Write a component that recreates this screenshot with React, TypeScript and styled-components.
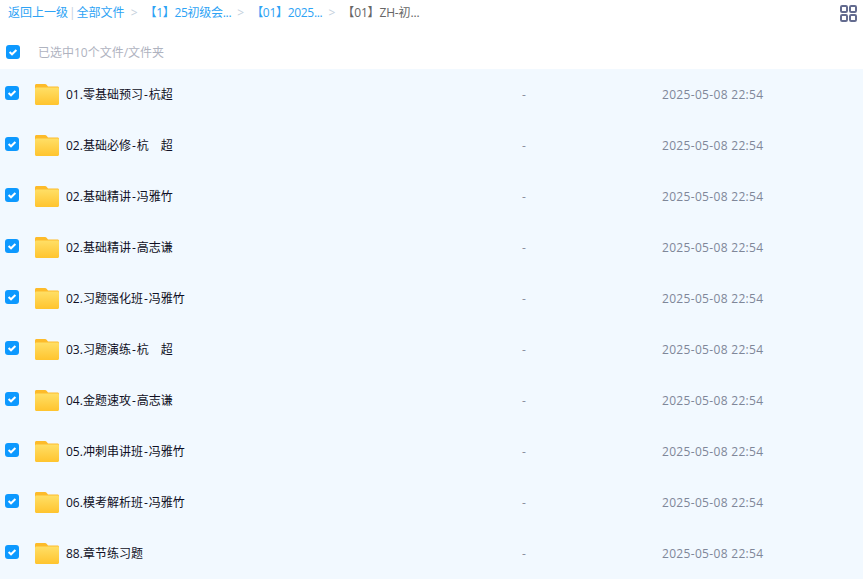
import { createGlobalStyle, styled } from 'styled-components';

const GlobalStyle = createGlobalStyle`
  html, body {
    margin: 0;
    padding: 0;
    background: #fff;
    overflow: hidden;
  }
  body {
    font-family: "Open Sans", "Noto Sans CJK SC", sans-serif;
    font-size: 12px;
  }
`;

const files = [
  '01.零基础预习-杭超',
  '02.基础必修-杭\u3000超',
  '02.基础精讲-冯雅竹',
  '02.基础精讲-高志谦',
  '02.习题强化班-冯雅竹',
  '03.习题演练-杭\u3000超',
  '04.金题速攻-高志谦',
  '05.冲刺串讲班-冯雅竹',
  '06.模考解析班-冯雅竹',
  '88.章节练习题',
];

const crumbs = ['【1】25初级会...', '【01】2025...'];

const FolderIcon = () => (
  <FolderSvg viewBox="0 0 24 21">
    <defs>
      <linearGradient id="folderFront" x1="0" y1="0" x2="0" y2="1">
        <stop offset="0" stopColor="#ffdf66" />
        <stop offset="1" stopColor="#ffc42e" />
      </linearGradient>
    </defs>
    <path
      d="M1.5 0H10c.8 0 1.3.3 1.8.9L13 2.5h9.5c.9 0 1.5.6 1.5 1.5v5H0V1.5C0 .6.6 0 1.5 0z"
      fill="#fdbb2a"
    />
    <path
      d="M1.5 3.5H22.5c.9 0 1.5.6 1.5 1.5v14.5c0 .9-.6 1.5-1.5 1.5H1.5C.6 21 0 20.4 0 19.5V5c0-.9.6-1.5 1.5-1.5z"
      fill="url(#folderFront)"
    />
  </FolderSvg>
);

const CheckIcon = () => (
  <CheckSvg viewBox="0 0 14 14">
    <rect width="14" height="14" rx="3" fill="#0d99ff" />
    <path d="M3.6 7.1 6 9.3l4.4-4.3" fill="none" stroke="#fff" strokeWidth="2" />
  </CheckSvg>
);

const GridIcon = () => (
  <GridSvg viewBox="0 0 17 17">
    <rect x="1" y="1" width="6" height="6" rx="1.2" />
    <rect x="10" y="1" width="6" height="6" rx="1.2" />
    <rect x="1" y="10" width="6" height="6" rx="1.2" />
    <rect x="10" y="10" width="6" height="6" rx="1.2" />
  </GridSvg>
);

export default function App() {
  return (
    <Page>
      <GlobalStyle />
      <Breadcrumb>
        <CrumbLink>返回上一级</CrumbLink>
        <Divider>|</Divider>
        <CrumbLink>全部文件</CrumbLink>
        <Arrow>&gt;</Arrow>
        {crumbs.map((crumb) => (
          <CrumbGroup key={crumb}>
            <FolderCrumb>{crumb}</FolderCrumb>
            <Arrow>&gt;</Arrow>
          </CrumbGroup>
        ))}
        <CrumbCurrent>【01】ZH-初...</CrumbCurrent>
        <GridButton>
          <GridIcon />
        </GridButton>
      </Breadcrumb>
      <SelectBar>
        <CheckIcon />
        <SelectText>已选中10个文件/文件夹</SelectText>
      </SelectBar>
      <List>
        {files.map((name) => {
          const [course, teacher] = name.split('-');
          return (
            <Row key={name}>
              <RowCheck>
                <CheckIcon />
              </RowCheck>
              <FolderIcon />
              <FileName>
                {course}
                {teacher && <Hyphen>-</Hyphen>}
                {teacher}
              </FileName>
              <Size>-</Size>
              <DateText>2025-05-08 22:54</DateText>
            </Row>
          );
        })}
      </List>
    </Page>
  );
}

const Page = styled.div`
  width: 863px;
  height: 585px;
`;

const Breadcrumb = styled.div`
  display: flex;
  align-items: center;
  height: 26px;
  padding-left: 8px;
  line-height: 26px;
  white-space: nowrap;
`;

const CrumbGroup = styled.span`
  display: inline-flex;
  align-items: center;
`;

const CrumbLink = styled.span`
  color: #2ea3f5;
`;

const FolderCrumb = styled(CrumbLink)`
  letter-spacing: -0.3px;
`;

const Divider = styled.span`
  margin: 0 1px;
  color: #c4d0dc;
`;

const Arrow = styled.span`
  margin: 0 7px 0 6px;
  color: #c4d0dc;
`;

const CrumbCurrent = styled.span`
  color: #666;
  letter-spacing: -0.15px;
`;

const GridButton = styled.span`
  display: flex;
  margin-left: auto;
  margin-right: 6px;
`;

const GridSvg = styled.svg`
  width: 17px;
  height: 17px;
  fill: none;
  stroke: #636b8f;
  stroke-width: 2;
`;

const SelectBar = styled.div`
  display: flex;
  align-items: center;
  height: 34px;
  padding: 9px 0 0 6px;
`;

const SelectText = styled.span`
  margin-left: 18px;
  color: #afb3bf;
`;

const CheckSvg = styled.svg`
  display: block;
  width: 14px;
  height: 14px;
  flex: none;
`;

const List = styled.div`
  background: #f2f9ff;
`;

const Row = styled.div`
  display: flex;
  align-items: center;
  height: 51px;
  padding-left: 5px;
`;

const RowCheck = styled.span`
  margin: -3px 16px 0 0;
`;

const FolderSvg = styled.svg`
  width: 24px;
  height: 21px;
  flex: none;
`;

const FileName = styled.span`
  width: 456px;
  margin: 0 0 2px 7px;
  color: #0f0f24;
`;

const Hyphen = styled.span`
  padding: 0 1px;
`;

const Size = styled.span`
  width: 140px;
  color: #8a8f9e;
`;

const DateText = styled.span`
  color: #7f8799;
  letter-spacing: 0.32px;
`;
